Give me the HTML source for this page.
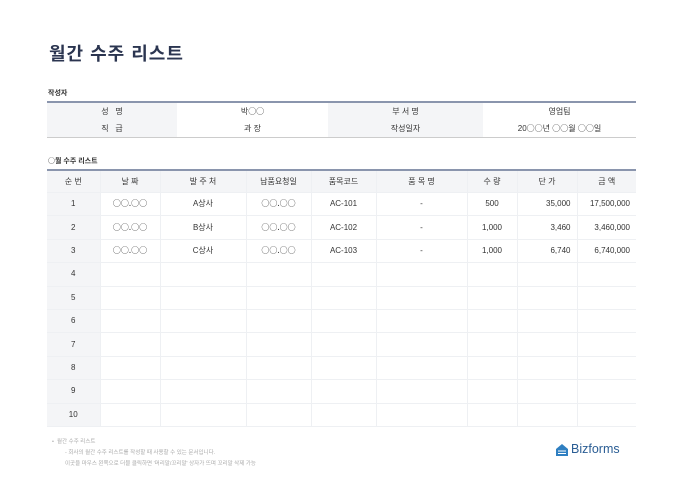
<!DOCTYPE html>
<html><head><meta charset="utf-8"><style>
body{margin:0;width:680px;height:481px;background:#fff;font-family:"Liberation Sans","Noto Sans CJK KR",sans-serif;position:relative;overflow:hidden;color:#333}
.c{font-family:"Noto Sans CJK KR",sans-serif}
.t{position:absolute;left:49px;top:40px;font-size:18px;font-weight:bold;color:#2b3550;letter-spacing:1px}
.s{position:absolute;font-size:7px;font-weight:bold;color:#333}
table{position:absolute;left:47px;border-collapse:collapse;font-size:8px;table-layout:fixed}
td{text-align:center;padding:0;color:#333;line-height:10px}
.info{top:101px;width:589px;border-top:2px solid #8a95ad;border-bottom:1px solid #ccc}
.info td{height:17px}
.g{background:#f4f5f7}
.main{top:169px;width:589px;border-top:2px solid #8a95ad;border-bottom:1px solid #bbb}
.main td{height:22.4px;border-left:1px solid #eef0f3;border-bottom:1px solid #eef0f3}
.main tr td:first-child{border-left:none;background:#f4f5f7}
.main tr.h td{background:#f4f5f7;height:21px}
.r{text-align:right!important;padding-right:6px!important}
.f{position:absolute;font-size:5.5px;color:#aaa}
</style></head><body>
<div class="t">월간 수주 리스트</div>
<div class="s" style="left:48px;top:88px">작성자</div>
<table class="info">
<colgroup><col style="width:130px"><col style="width:151px"><col style="width:155px"><col style="width:153px"></colgroup>
<tr><td class="g">성 &nbsp; 명</td><td>박<span class="c">○○</span></td><td class="g">부 서 명</td><td>영업팀</td></tr>
<tr><td class="g">직 &nbsp; 급</td><td>과 장</td><td class="g">작성일자</td><td>20<span class="c">○○</span>년 <span class="c">○○</span>월 <span class="c">○○</span>일</td></tr>
</table>
<div class="s" style="left:48px;top:156px"><span class="c">○</span>월 수주 리스트</div>
<table class="main">
<colgroup><col style="width:53px"><col style="width:60px"><col style="width:86px"><col style="width:65px"><col style="width:65px"><col style="width:91px"><col style="width:50px"><col style="width:60px"><col style="width:59px"></colgroup>
<tr class="h"><td>순 번</td><td>날 짜</td><td>발 주 처</td><td>납품요청일</td><td>품목코드</td><td>품 목 명</td><td>수 량</td><td>단 가</td><td>금 액</td></tr>
<tr><td>1</td><td class="c">○○.○○</td><td>A상사</td><td class="c">○○.○○</td><td>AC-101</td><td>-</td><td>500</td><td class="r">35,000</td><td class="r">17,500,000</td></tr>
<tr><td>2</td><td class="c">○○.○○</td><td>B상사</td><td class="c">○○.○○</td><td>AC-102</td><td>-</td><td>1,000</td><td class="r">3,460</td><td class="r">3,460,000</td></tr>
<tr><td>3</td><td class="c">○○.○○</td><td>C상사</td><td class="c">○○.○○</td><td>AC-103</td><td>-</td><td>1,000</td><td class="r">6,740</td><td class="r">6,740,000</td></tr>
<tr><td>4</td><td></td><td></td><td></td><td></td><td></td><td></td><td></td><td></td></tr>
<tr><td>5</td><td></td><td></td><td></td><td></td><td></td><td></td><td></td><td></td></tr>
<tr><td>6</td><td></td><td></td><td></td><td></td><td></td><td></td><td></td><td></td></tr>
<tr><td>7</td><td></td><td></td><td></td><td></td><td></td><td></td><td></td><td></td></tr>
<tr><td>8</td><td></td><td></td><td></td><td></td><td></td><td></td><td></td><td></td></tr>
<tr><td>9</td><td></td><td></td><td></td><td></td><td></td><td></td><td></td><td></td></tr>
<tr><td>10</td><td></td><td></td><td></td><td></td><td></td><td></td><td></td><td></td></tr>
</table>
<div class="f" style="left:52px;top:437px">• &nbsp;월간 수주 리스트</div>
<div class="f" style="left:65px;top:448px">- 회사의 월간 수주 리스트를 작성할 때 사용할 수 있는 문서입니다.</div>
<div class="f" style="left:65px;top:459px">이곳을 마우스 왼쪽으로 더블 클릭하면 '머리말/꼬리말' 상자가 뜨며 꼬리말 삭제 가능</div>
<svg style="position:absolute;left:555px;top:443px" width="14" height="14" viewBox="0 0 14 14"><path d="M1 6 L7 1 L13 6 L13 13 L1 13Z" fill="#2f7fc1"/><path d="M3 8 H11 M3 10.5 H11" stroke="#fff" stroke-width="1"/></svg>
<div style="position:absolute;left:571px;top:442px;font-size:12.5px;color:#2a5d94">Bizforms</div>
</body></html>
